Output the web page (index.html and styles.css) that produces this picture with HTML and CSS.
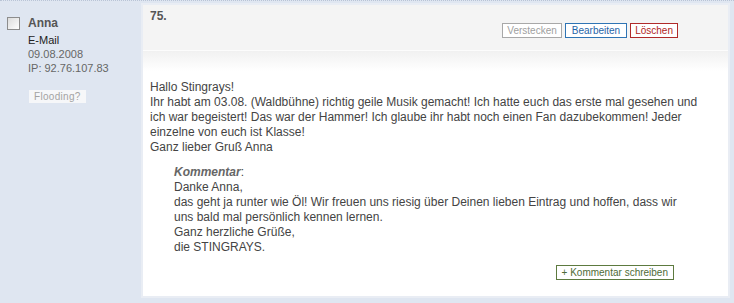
FILE: index.html
```html
<!DOCTYPE html>
<html lang="de">
<head>
    <meta charset="UTF-8">
    <meta name="viewport" content="width=device-width, initial-scale=1.0">
    <title>Gästebuch</title>
    <link rel="stylesheet" href="styles.css">
</head>
<body>
    <div class="entry">
        <div class="author">
            <div class="author-name">
                <span class="check"></span>
                <span>Anna</span>
            </div>
            <div class="author-meta">
                <a href="#" class="mail">E-Mail</a><br>
                09.08.2008<br>
                IP: 92.76.107.83
            </div>
            <span class="flood">Flooding?</span>
        </div>

        <div class="post">
            <div class="post-head">
                <div class="post-num">75.</div>
                <div class="actions">
                    <span class="btn btn-hide">Verstecken</span>
                    <span class="btn btn-edit">Bearbeiten</span>
                    <span class="btn btn-delete">Löschen</span>
                </div>
            </div>
            <div class="post-body">
                <p>
                    Hallo Stingrays!<br>
                    Ihr habt am 03.08. (Waldbühne) richtig geile Musik gemacht! Ich hatte euch das erste mal gesehen und ich war begeistert! Das war der Hammer! Ich glaube ihr habt noch einen Fan dazubekommen! Jeder einzelne von euch ist Klasse!<br>
                    Ganz lieber Gruß Anna
                </p>
                <div class="comment">
                    <em>Kommentar</em>:<br>
                    Danke Anna,<br>
                    das geht ja runter wie Öl! Wir freuen uns riesig über Deinen lieben Eintrag und hoffen, dass wir uns bald mal persönlich kennen lernen.<br>
                    Ganz herzliche Grüße,<br>
                    die STINGRAYS.
                </div>
                <div class="reply">
                    <span class="btn btn-reply">+ Kommentar schreiben</span>
                </div>
            </div>
        </div>
    </div>
</body>
</html>
```

FILE: styles.css
```css
body {
    margin: 0;
    padding: 0;
    font-family: 'Liberation Sans', Arial, sans-serif;
    background-color: #ffffff;
    color: #444;
}

.entry {
    display: flex;
    height: 303px;
    box-sizing: border-box;
    background-color: #dfe6f1;
    border-top: 1px dotted #b9c4d6;
}

.author {
    width: 140px;
    flex-shrink: 0;
    padding: 14px 0 0 7px;
    box-sizing: border-box;
}

.author-name {
    display: flex;
    align-items: center;
    gap: 8px;
    font-size: 12px;
    font-weight: bold;
    color: #555;
    line-height: 16px;
}

.check {
    width: 11px;
    height: 11px;
    border: 1px solid #8d8d8d;
    background: linear-gradient(135deg, #dcdcdc, #ffffff);
}

.author-meta {
    margin: 2px 0 0 21px;
    font-size: 11px;
    line-height: 14px;
    color: #666;
}

.mail {
    color: #222;
    text-decoration: none;
}

.flood {
    display: inline-block;
    margin: 15px 0 0 22px;
    padding: 0 5px;
    background-color: #f6f7f9;
    color: #a3a3a3;
    font-size: 10px;
    line-height: 13px;
    letter-spacing: 0.3px;
}

.post {
    flex: 1;
    margin: 2px 4px 5px 1px;
    border: 2px solid #e9edf4;
    display: flex;
    flex-direction: column;
}

.post-head {
    height: 46px;
    background-color: #f4f4f4;
    border-bottom: 1px solid #fcfcfc;
    padding: 4px 50px 0 7px;
    box-sizing: border-box;
}

.post-num {
    font-size: 12px;
    font-weight: bold;
    color: #555;
    line-height: 14px;
}

.actions {
    display: flex;
    justify-content: flex-end;
    gap: 3px;
    margin-top: 0;
}

.btn {
    display: inline-block;
    padding: 0 4px;
    font-size: 10px;
    line-height: 13px;
    border: 1px solid #999;
    background-color: #fff;
}

.btn-hide {
    color: #a0a0a0;
    border-color: #a8a8a8;
}

.btn-edit {
    color: #1f65a8;
    border-color: #2f74b4;
    padding: 0 6px;
}

.btn-delete {
    color: #b01e1e;
    border-color: #b02a2a;
}

.btn-reply {
    color: #4f6b37;
    border-color: #5d7a3f;
    padding: 0 5px;
}

.post-body {
    flex: 1;
    padding: 29px 26px 0 7px;
    background: linear-gradient(#f1f1f1, #ffffff 20px);
    font-size: 12px;
    line-height: 15px;
}

.post-body p {
    margin: 0;
}

.comment {
    margin: 10px 14px 0 24px;
}

.comment em {
    font-weight: bold;
    color: #666;
}

.reply {
    display: flex;
    justify-content: flex-end;
    padding-right: 28px;
    margin-top: 10px;
}
```
